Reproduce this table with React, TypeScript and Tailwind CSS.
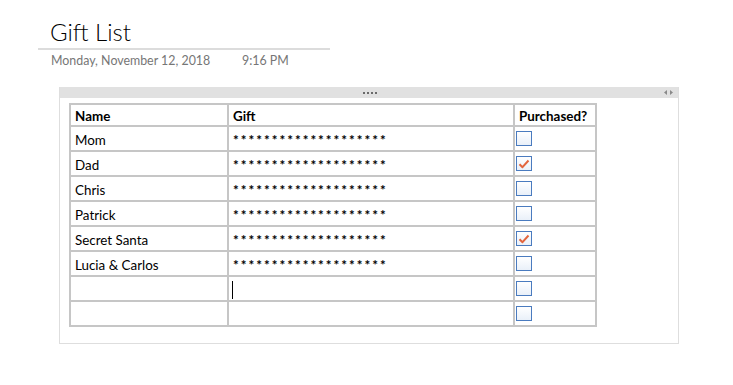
import { Fragment } from "react";

type Row = { name: string; gift: boolean; done: boolean; cursor?: boolean };

const rows: Row[] = [
  { name: "Mom", gift: true, done: false },
  { name: "Dad", gift: true, done: true },
  { name: "Chris", gift: true, done: false },
  { name: "Patrick", gift: true, done: false },
  { name: "Secret Santa", gift: true, done: true },
  { name: "Lucia & Carlos", gift: true, done: false },
  { name: "", gift: false, done: false, cursor: true },
  { name: "", gift: false, done: false },
];

const Checkbox = ({ checked }: { checked: boolean }) => (
  <div className="mt-[4px] ml-[1px] w-[16px] h-[15px] border-[1.5px] border-[#4a7bbf] bg-gradient-to-b from-white to-[#e9f0f9] flex items-center justify-center">
    {checked && (
      <svg width="12" height="10" viewBox="0 0 12 10">
        <path d="M1.5 5.2 L4.5 8.2 L10.5 1.5" fill="none" stroke="#e2653e" strokeWidth="2" strokeLinejoin="round" />
      </svg>
    )}
  </div>
);

export default function App() {
  return (
    <div className="w-[733px] h-[385px] bg-white font-['Lato',sans-serif] text-black">
      {/* page title */}
      <div className="pt-[17px] pl-[50px] text-[24px] font-light leading-[30px]">Gift List</div>
      <div className="ml-[38px] mt-[1px] w-[292px] h-[2px] bg-[#dcdcdc]" />
      <div className="flex pl-[51px] mt-[3px] text-[12.4px] leading-[16px] text-[#767676]">
        <span className="w-[191px]">Monday, November 12, 2018</span>
        <span>9:16 PM</span>
      </div>

      {/* note container */}
      <div className="ml-[59px] mt-[18px] w-[620px] h-[257px] border border-[#dedede] border-t-0">
        <div className="h-[11px] bg-[#e1e1e1] flex items-center relative">
          <div className="flex gap-[2px] ml-[303px]">
            <span className="w-[2px] h-[2px] bg-[#6b6b6b]" />
            <span className="w-[2px] h-[2px] bg-[#6b6b6b]" />
            <span className="w-[2px] h-[2px] bg-[#6b6b6b]" />
            <span className="w-[2px] h-[2px] bg-[#6b6b6b]" />
          </div>
          <div className="ml-auto mr-[5px] flex gap-[3px]">
            <svg width="3" height="5" viewBox="0 0 3 5"><path d="M3 0 L0 2.5 L3 5 Z" fill="#8a8a8a" /></svg>
            <svg width="3" height="5" viewBox="0 0 3 5"><path d="M0 0 L3 2.5 L0 5 Z" fill="#8a8a8a" /></svg>
          </div>
        </div>

        <div className="ml-[9px] mt-[5px] inline-grid grid-cols-[156px_284px_80px] gap-[2px] p-[2px] bg-[#c6c6c6] text-[13.4px] leading-[14px]">
          <div className="bg-white h-[20px] pl-[4px] pt-[2px] flex items-center font-bold">Name</div>
          <div className="bg-white h-[20px] pl-[4px] pt-[2px] flex items-center font-bold">Gift</div>
          <div className="bg-white h-[20px] pl-[4px] pt-[2px] flex items-center font-bold">Purchased?</div>
          {rows.map((r, i) => (
            <Fragment key={i}>
              <div className="bg-white h-[23px] pl-[4px] pt-[2px] flex items-center">{r.name}</div>
              <div className="bg-white h-[23px] pl-[4px] pt-[2px] flex items-center">
                {r.gift && <span className="font-bold text-[13.5px] tracking-[2px]">********************</span>}
                {r.cursor && <div className="-ml-[1px] w-[1px] h-[18px] bg-black" />}
              </div>
              <div className="bg-white h-[23px]">
                <Checkbox checked={r.done} />
              </div>
            </Fragment>
          ))}
        </div>
      </div>
    </div>
  );
}
